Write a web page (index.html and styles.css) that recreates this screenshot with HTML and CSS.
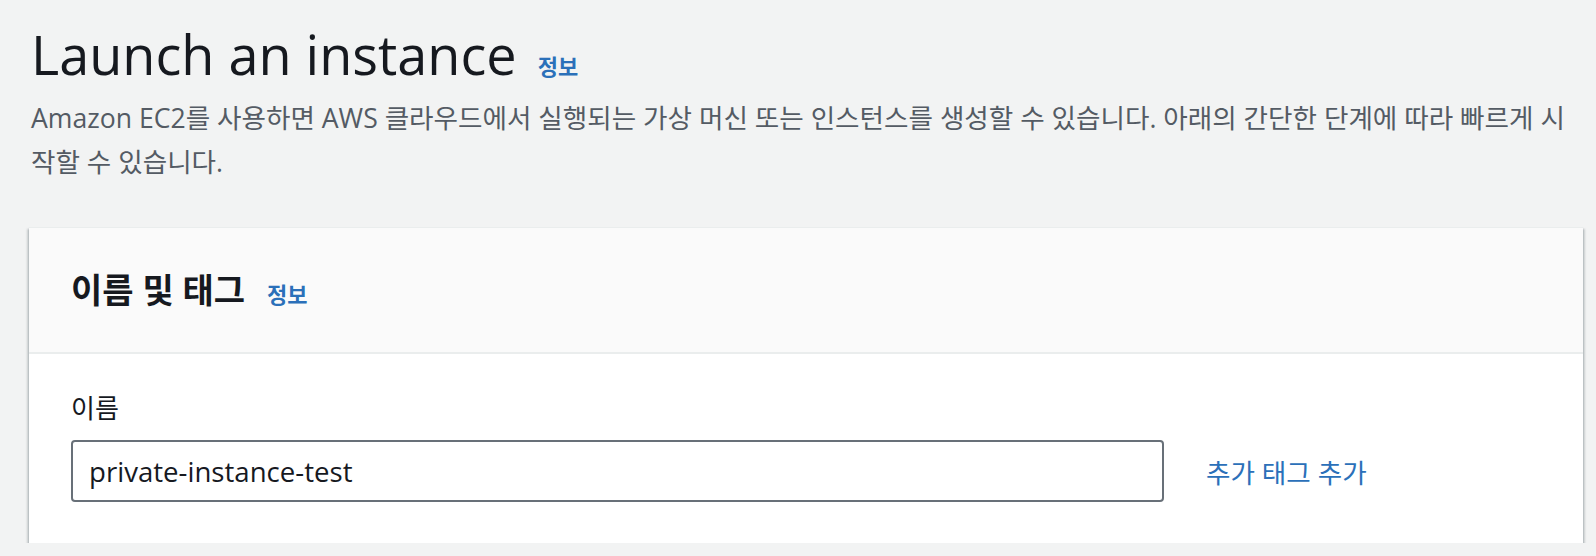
FILE: index.html
```html
<!DOCTYPE html>
<html lang="ko">
<head>
    <meta charset="UTF-8">
    <meta name="viewport" content="width=device-width, initial-scale=1.0">
    <title>Launch an instance</title>
    <link rel="stylesheet" href="styles.css">
</head>
<body>

    <div class="page-head">
        <h1 class="page-title">Launch an instance <a href="#" class="info-link">정보</a></h1>
        <p class="page-desc">Amazon EC2를 사용하면 AWS 클라우드에서 실행되는 가상 머신 또는 인스턴스를 생성할 수 있습니다. 아래의 간단한 단계에 따라 빠르게 시작할 수 있습니다.</p>
    </div>

    <section class="card">
        <div class="card-header">
            <h2 class="card-title">이름 및 태그 <a href="#" class="info-link">정보</a></h2>
        </div>
        <div class="card-body">
            <label class="field-label" for="name">이름</label>
            <div class="field-row">
                <input type="text" id="name" class="field-input" value="private-instance-test">
                <a href="#" class="text-link">추가 태그 추가</a>
            </div>
        </div>
    </section>

</body>
</html>
```

FILE: styles.css
```css
body {
    margin: 0;
    padding: 22px 13px 0 29px;
    background-color: #f2f3f3;
    font-family: "Open Sans", "Noto Sans CJK KR", sans-serif;
    color: #16191f;
}
a {
    text-decoration: none;
}
.page-title {
    margin: 0 0 0 2px;
    font-size: 54px;
    line-height: 64px;
    font-weight: 400;
}
.info-link {
    color: #2b70b9;
    font-size: 22px;
    font-weight: 700;
    line-height: 1;
}
.page-title .info-link {
    margin-left: 7px;
}
.page-desc {
    margin: 10px 0 0 2px;
    font-size: 26.6px;
    line-height: 44px;
    color: #545b64;
}
.card {
    margin-top: 43px;
    background-color: #fff;
    border-top: 1px solid #eaeded;
    box-shadow: 0 2px 2px rgba(0, 28, 36, 0.3), 2px 2px 2px rgba(0, 28, 36, 0.15), -2px 2px 2px rgba(0, 28, 36, 0.15);
}
.card-header {
    background-color: #fafafa;
    padding: 39px 42px;
    border-bottom: 2px solid #eaeded;
}
.card-title {
    margin: 0;
    font-size: 34px;
    line-height: 46px;
    font-weight: 700;
}
.card-title .info-link {
    margin-left: 13px;
}
.card-body {
    padding: 32px 13px 41px 42px;
}
.field-label {
    display: block;
    font-size: 26px;
    line-height: 44px;
    margin-bottom: 10px;
}
.field-row {
    display: grid;
    grid-template-columns: 1093px auto;
    align-items: center;
    gap: 42px;
}
.field-input {
    box-sizing: border-box;
    height: 62px;
    padding: 0 16px;
    border: 2px solid #687078;
    border-radius: 4px;
    font-family: inherit;
    font-size: 27.6px;
    color: #16191f;
    background: #fff;
}
.text-link {
    color: #2b70b9;
    font-size: 26.6px;
}
```
